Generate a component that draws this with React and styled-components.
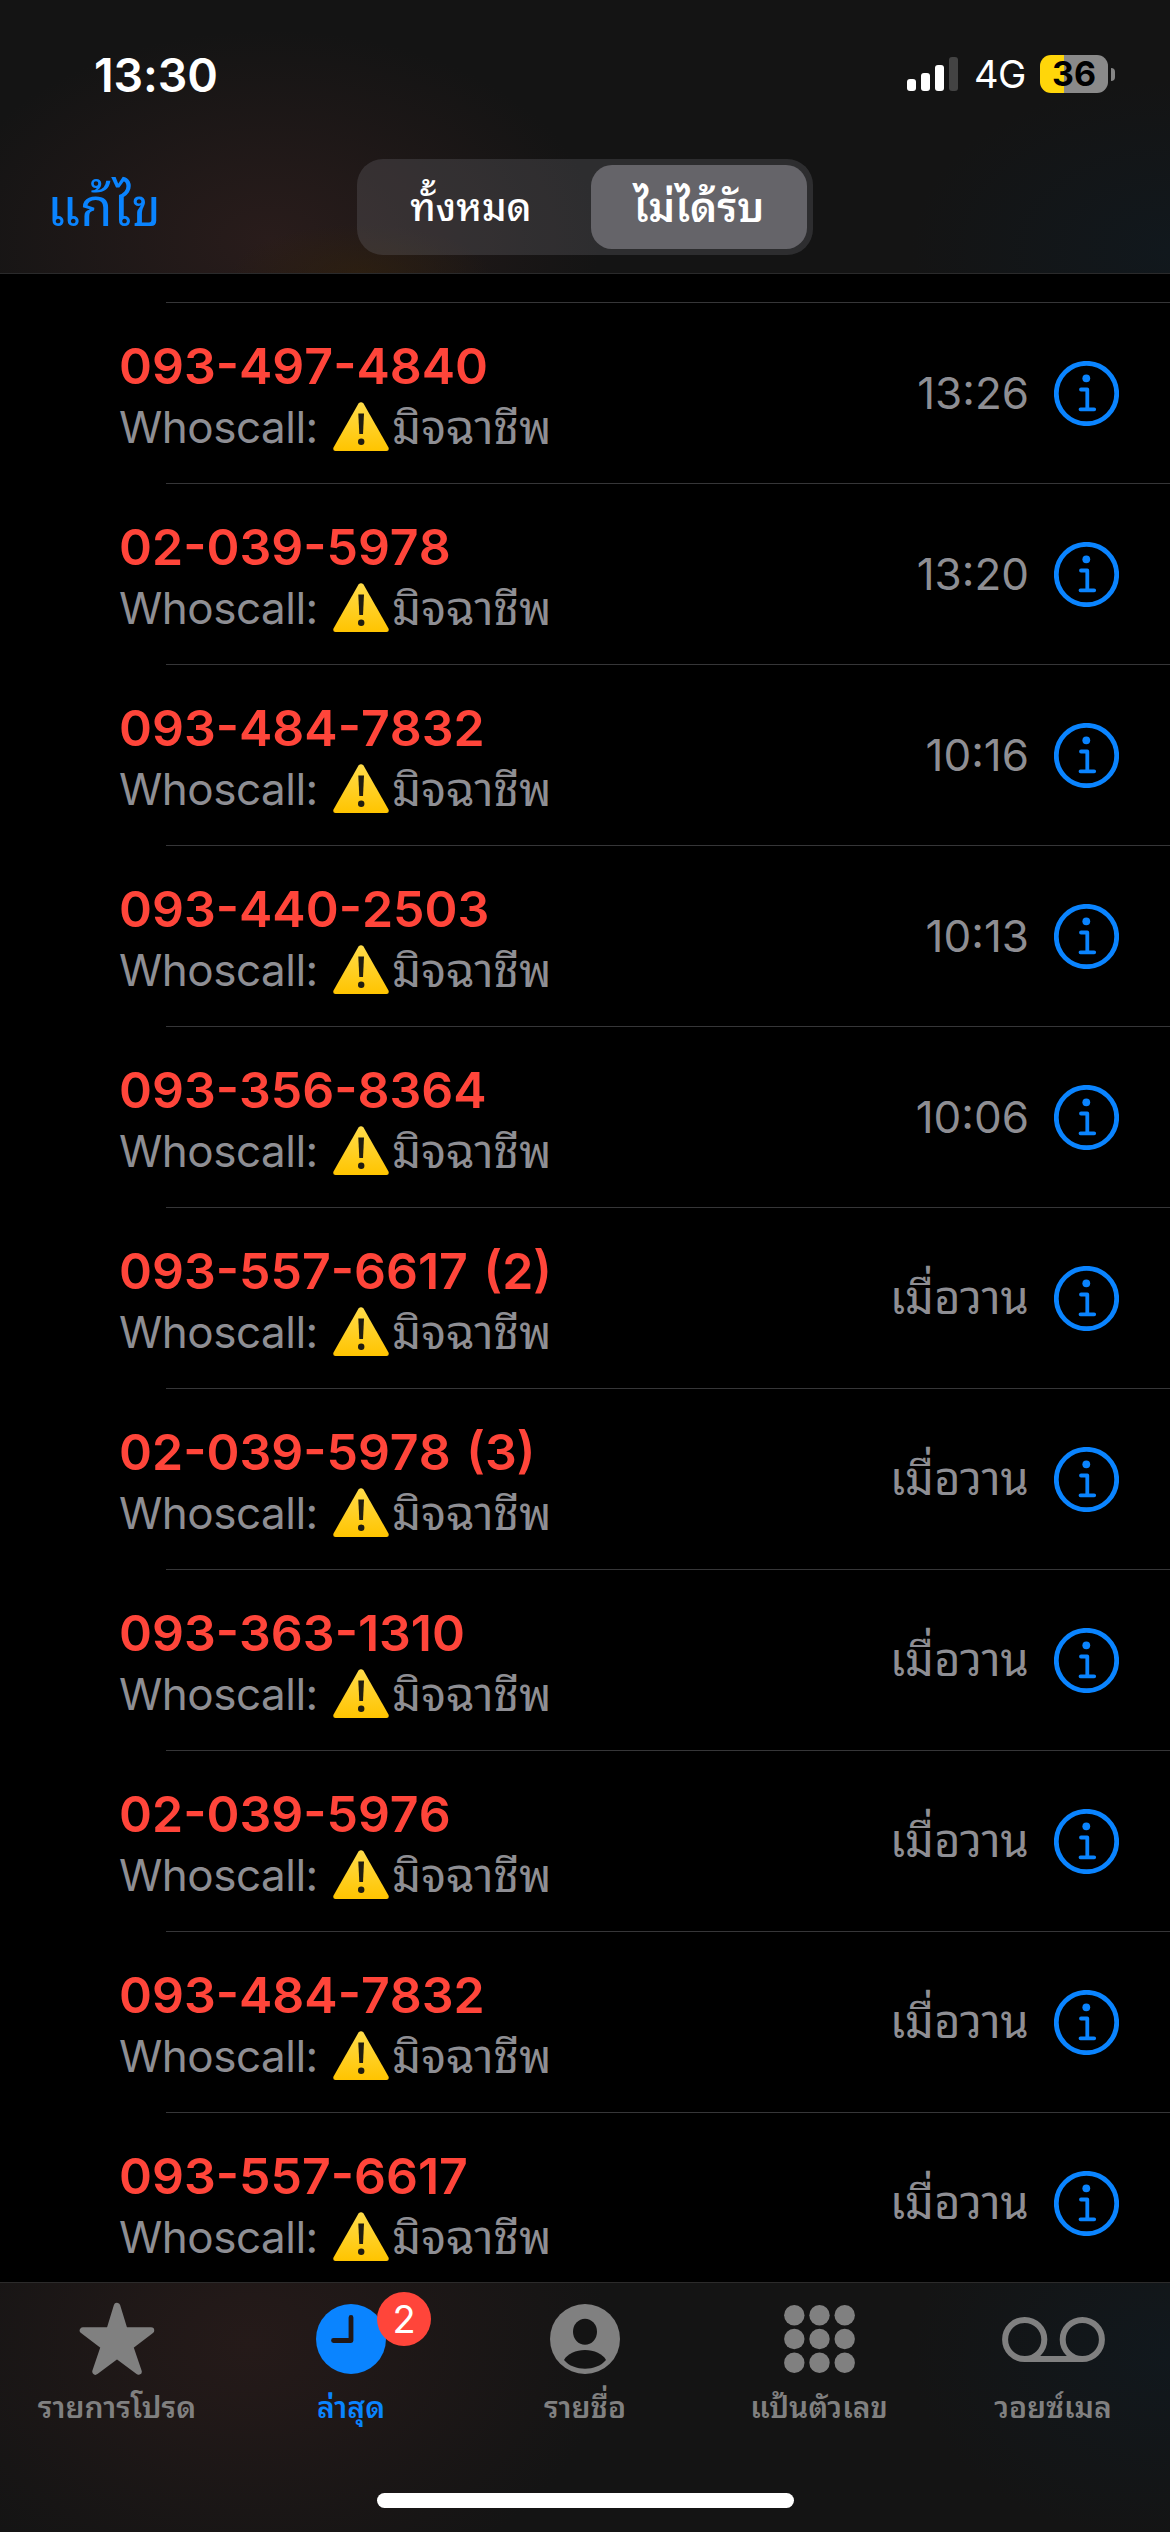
import React, { useState } from "react";
import styled, { createGlobalStyle } from "styled-components";

const calls = [
  { number: "093-497-4840", time: "13:26" },
  { number: "02-039-5978", time: "13:20" },
  { number: "093-484-7832", time: "10:16" },
  { number: "093-440-2503", time: "10:13" },
  { number: "093-356-8364", time: "10:06" },
  { number: "093-557-6617 (2)", time: "เมื่อวาน", thai: true },
  { number: "02-039-5978 (3)", time: "เมื่อวาน", thai: true },
  { number: "093-363-1310", time: "เมื่อวาน", thai: true },
  { number: "02-039-5976", time: "เมื่อวาน", thai: true },
  { number: "093-484-7832", time: "เมื่อวาน", thai: true },
  { number: "093-557-6617", time: "เมื่อวาน", thai: true },
];

const StarIcon = () => (
  <svg width="76" height="74" viewBox="0 0 76 74">
    <path
      d="M38 4 L45.500 28.500 H72 L51 44.500 L59.500 69.500 L38 53.500 L16.500 69.500 L25 44.500 L4 28.500 H30.500 Z"
      fill="currentColor"
      stroke="currentColor"
      strokeWidth="6.500"
      strokeLinejoin="round"
    />
  </svg>
);

const ClockIcon = () => (
  <svg width="70" height="70" viewBox="0 0 70 70">
    <circle cx="35" cy="35" r="35" fill="currentColor" />
    <path
      d="M35 13.5 V36.5 H17.5"
      fill="none"
      stroke="#211817"
      strokeWidth="4.8"
      strokeLinecap="round"
      strokeLinejoin="round"
    />
  </svg>
);

const PersonIcon = () => (
  <svg width="70" height="70" viewBox="0 0 70 70">
    <circle cx="35" cy="35" r="35" fill="currentColor" />
    <ellipse cx="35" cy="27.8" rx="12" ry="13" fill="#141414" />
    <path d="M14 56 C17 50 26 46 35 46 C44 46 53 50 56 56 C51 62 43 64.7 35 64.7 C27 64.7 19 62 14 56 Z" fill="#141414" />
  </svg>
);

const KeypadIcon = () => (
  <svg width="71" height="70" viewBox="0 0 71 70" fill="currentColor">
    {[10.3, 35.5, 60.7].map((x) =>
      [11.3, 35, 58.7].map((y) => <circle key={`${x}-${y}`} cx={x} cy={y} r="10.2" />)
    )}
  </svg>
);

const VoicemailIcon = () => (
  <svg width="103" height="70" viewBox="0 0 103 70" fill="none" stroke="currentColor" strokeWidth="6">
    <circle cx="22.7" cy="35.500" r="19.600" />
    <circle cx="80.300" cy="35.500" r="19.600" />
    <path d="M22.7 55.100 H80.300" />
  </svg>
);

const InfoIcon = () => (
  <svg width="65" height="65" viewBox="0 0 65 65" fill="none" stroke="#0a84ff">
    <circle cx="32.500" cy="32.500" r="30.200" strokeWidth="4.800" />
    <circle cx="32.300" cy="17.300" r="3.900" fill="#0a84ff" stroke="none" />
    <path d="M27 28.500 H33.300 V48.300 M26.500 48.300 H40.200" strokeWidth="3.800" strokeLinecap="round" strokeLinejoin="round" />
  </svg>
);

const WarningIcon = () => (
  <svg width="56" height="49" viewBox="0 0 56 49">
    <defs>
      <linearGradient id="warn" x1="0" y1="0" x2="0" y2="1">
        <stop offset="0" stopColor="#ffdc4a" />
        <stop offset="1" stopColor="#ffc400" />
      </linearGradient>
    </defs>
    <path
      d="M25.500 1.500 Q28 -1 30.500 1.500 L55.500 45.500 Q56.500 48.700 53.500 49 H2.500 Q-0.500 48.700 0.500 45.500 Z"
      fill="url(#warn)"
    />
    <path d="M25.300 11.500 H31 L30 32 H26.300 Z" fill="#1f1c10" />
    <circle cx="28.200" cy="39.700" r="3.200" fill="#1f1c10" />
  </svg>
);

const tabs = [
  { label: "รายการโปรด", icon: StarIcon },
  { label: "ล่าสุด", icon: ClockIcon, badge: 2 },
  { label: "รายชื่อ", icon: PersonIcon },
  { label: "แป้นตัวเลข", icon: KeypadIcon },
  { label: "วอยซ์เมล", icon: VoicemailIcon },
];

const App = () => {
  const [activeTab, setActiveTab] = useState(1);
  const [missedOnly, setMissedOnly] = useState(true);

  return (
    <Phone>
      <GlobalStyle />
      <Header>
        <StatusBar>
          <Clock>13:30</Clock>
          <StatusIcons>
            <Signal>
              <Bar $h={12} />
              <Bar $h={18} />
              <Bar $h={26} />
              <Bar $h={34} $off />
            </Signal>
            <Network>4G</Network>
            <Battery>36</Battery>
            <BatteryTip />
          </StatusIcons>
        </StatusBar>
        <NavBar>
          <EditButton>แก้ไข</EditButton>
          <Segmented>
            <Segment $active={!missedOnly} onClick={() => setMissedOnly(false)}>
              ทั้งหมด
            </Segment>
            <Segment $active={missedOnly} onClick={() => setMissedOnly(true)}>
              ไม่ได้รับ
            </Segment>
          </Segmented>
        </NavBar>
      </Header>

      <CallList>
        {calls.map((call, i) => (
          <CallRow key={i}>
            <Separator />
            <RowContent>
              <Caller>
                <Number>{call.number}</Number>
                <Source>
                  <SourceName>Whoscall:</SourceName>
                  <WarningIcon />
                  <SourceTag>มิจฉาชีพ</SourceTag>
                </Source>
              </Caller>
              <Time $thai={call.thai}>{call.time}</Time>
              <InfoIcon />
            </RowContent>
          </CallRow>
        ))}
      </CallList>

      <Footer>
        <TabBar>
          {tabs.map(({ label, icon: Icon, badge }, i) => (
            <Tab key={label} $active={i === activeTab} onClick={() => setActiveTab(i)}>
              <IconBox>
                <Icon />
                {badge && <Badge>{badge}</Badge>}
              </IconBox>
              <TabLabel>{label}</TabLabel>
            </Tab>
          ))}
        </TabBar>
        <HomeIndicator />
      </Footer>
    </Phone>
  );
};

export default App;

const GlobalStyle = createGlobalStyle`
  * {
    box-sizing: border-box;
  }

  body {
    margin: 0;
    background: #000;
    font-family: Inter, "Noto Sans Thai Looped", Thonburi, Loma, Garuda, Waree, Umpush, Laksaman, "Noto Sans", sans-serif;
  }

  svg {
    display: block;
    flex-shrink: 0;
  }

  button {
    margin: 0;
    padding: 0;
    border: 0;
    background: none;
    color: inherit;
    font-family: inherit;
  }
`;

const Phone = styled.div`
  width: 1170px;
  height: 2532px;
  display: flex;
  flex-direction: column;
  overflow: hidden;
  background: #000;
`;

const Header = styled.header`
  height: 274px;
  flex-shrink: 0;
  border-bottom: 1px solid #2a2a2b;
  background:
    radial-gradient(ellipse 130px 50px at 360px 274px, rgba(50, 34, 12, 0.6), transparent),
    radial-gradient(ellipse 330px 210px at 270px 240px, #291c1b, transparent),
    radial-gradient(ellipse 260px 170px at 1170px 250px, #11181d, transparent),
    #141414;
`;

const StatusBar = styled.div`
  height: 148px;
  display: flex;
  justify-content: space-between;
  padding: 0 55px 0 94px;
`;

const Clock = styled.div`
  padding-top: 46px;
  font-size: 46.500px;
  line-height: 58px;
  font-weight: 600;
  letter-spacing: -0.1px;
  color: #fff;
`;

const StatusIcons = styled.div`
  height: 38px;
  margin-top: 55px;
  display: flex;
  align-items: center;
`;

const Signal = styled.div`
  display: flex;
  align-items: flex-end;
  gap: 5px;
  height: 34px;
`;

const Bar = styled.div`
  width: 9px;
  height: ${({ $h }) => $h}px;
  border-radius: 3px;
  background: ${({ $off }) => ($off ? "#434343" : "#fff")};
`;

const Network = styled.div`
  width: 66px;
  margin-left: 16px;
  font-size: 38px;
  line-height: 40px;
  letter-spacing: -0.5px;
  color: #fff;
`;

const Battery = styled.div`
  width: 68px;
  height: 38px;
  border-radius: 11px;
  background: linear-gradient(90deg, #ffd60a 24px, #8a8a8a 24px);
  font-size: 34px;
  line-height: 38px;
  font-weight: 700;
  text-align: center;
  color: #000;
`;

const BatteryTip = styled.div`
  width: 4px;
  height: 13px;
  margin-left: 3px;
  border-radius: 0 6px 6px 0;
  background: #858585;
`;

const NavBar = styled.div`
  display: grid;
  grid-template-columns: 310px 456px;
  padding: 11px 0 0 47px;
`;

const EditButton = styled.button`
  justify-self: start;
  height: 96px;
  font-size: 53px;
  line-height: 96px;
  color: #0a84ff;
`;

const Segmented = styled.div`
  height: 96px;
  padding: 6px;
  display: grid;
  grid-template-columns: 1fr 216px;
  column-gap: 12px;
  border-radius: 26px;
  background: rgba(118, 118, 128, 0.26);
`;

const Segment = styled.button`
  height: 84px;
  border-radius: 21px;
  font-size: ${({ $active }) => ($active ? 41 : 38.5)}px;
  line-height: 84px;
  font-weight: ${({ $active }) => ($active ? 600 : 500)};
  color: #fff;
  background: ${({ $active }) => ($active ? "#656469" : "transparent")};
`;

const CallList = styled.main`
  flex: 1;
  min-height: 0;
  padding-top: 28px;
  overflow: hidden;
`;

const CallRow = styled.div`
  height: 181px;
`;

const Separator = styled.div`
  height: 1px;
  margin-left: 166px;
  background: #363638;
`;

const RowContent = styled.div`
  height: 180px;
  display: flex;
  align-items: center;
  padding: 0 51px 0 119px;
`;

const Caller = styled.div`
  flex: 1;
  padding-top: 5px;
`;

const Number = styled.div`
  font-size: 50px;
  line-height: 62px;
  font-weight: 600;
  font-kerning: none;
  word-spacing: 3px;
  color: #ff453a;
`;

const Source = styled.div`
  height: 60px;
  display: flex;
  align-items: center;
  color: #8e8e93;
`;

const SourceName = styled.span`
  width: 214px;
  font-size: 44px;
  line-height: 60px;
  letter-spacing: -0.5px;
`;

const SourceTag = styled.span`
  margin-left: 3px;
  font-size: 46px;
  line-height: 60px;
`;

const Time = styled.div`
  margin-right: 25px;
  font-size: ${({ $thai }) => ($thai ? 45.5 : 44)}px;
  line-height: 60px;
  font-kerning: ${({ $thai }) => ($thai ? "auto" : "none")};
  color: #8e8e93;
`;

const Footer = styled.footer`
  height: 250px;
  flex-shrink: 0;
  border-top: 1px solid #2c2b2b;
  background:
    radial-gradient(ellipse 360px 260px at 250px 60px, #251a19, transparent),
    radial-gradient(ellipse 260px 190px at 1170px 70px, #11181d, transparent),
    #141414;
`;

const TabBar = styled.nav`
  height: 210px;
  display: grid;
  grid-template-columns: repeat(5, 1fr);
`;

const Tab = styled.button`
  display: flex;
  flex-direction: column;
  align-items: center;
  padding-top: 21px;
  color: ${({ $active }) => ($active ? "#0a84ff" : "#808080")};
`;

const IconBox = styled.div`
  position: relative;
  height: 70px;
  display: flex;
  align-items: center;
`;

const Badge = styled.span`
  position: absolute;
  left: 61px;
  top: -12px;
  width: 54px;
  height: 54px;
  border-radius: 50%;
  background: #ff453a;
  color: #fff;
  font-size: 38px;
  line-height: 54px;
  text-align: center;
`;

const TabLabel = styled.span`
  margin-top: 13px;
  font-size: 30px;
  line-height: 40px;
  font-weight: 600;
`;

const HomeIndicator = styled.div`
  width: 417px;
  height: 15px;
  margin: 0 auto;
  border-radius: 8px;
  background: #fff;
`;
